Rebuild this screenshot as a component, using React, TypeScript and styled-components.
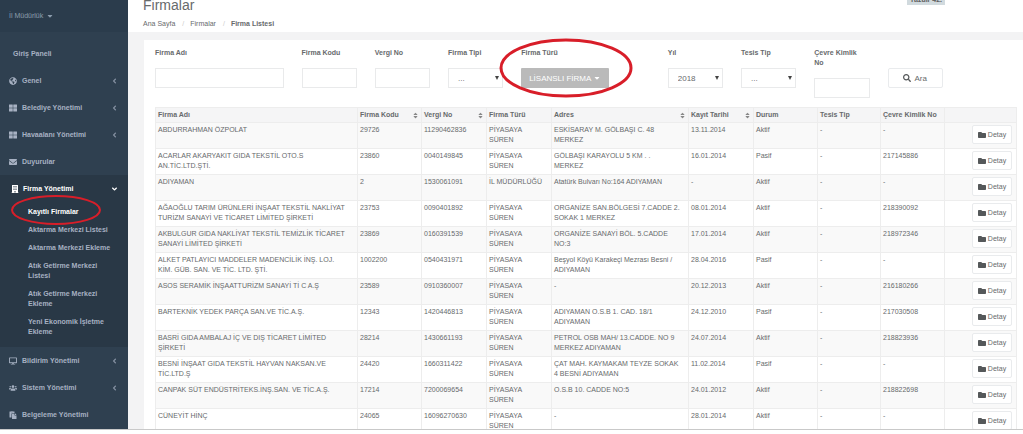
import React from "react";
import styled, { createGlobalStyle } from "styled-components";
import {
  FaGlobeAmericas,
  FaThLarge,
  FaEnvelope,
  FaBuilding,
  FaDesktop,
  FaUsers,
  FaPaste,
  FaFolder,
  FaSearch,
  FaAngleLeft,
  FaAngleDown,
  FaSort,
  FaCaretDown,
} from "react-icons/fa";

const GlobalStyle = createGlobalStyle`
  *, *::before, *::after { box-sizing: border-box; }
  body {
    margin: 0;
    background: #fff;
    color: #676a6c;
    font: 7px/10px "Liberation Sans", Arial, sans-serif;
  }
  a { color: inherit; text-decoration: none; }
  ul, ol { list-style: none; margin: 0; padding: 0; }
  button, input, select { font-family: inherit; color: inherit; margin: 0; }
`;

const Page = styled.div`
  height: 100vh;
  padding-bottom: 4px;
  overflow: hidden;
`;

const Shell = styled.div`
  display: flex;
  height: 100%;
  overflow: hidden;
  border-bottom: 1px solid #c9c9c9;
`;

const Sidebar = styled.nav`
  flex: 0 0 128px;
  background: #2f4050;
  color: #a7b1c2;
`;

const Profile = styled.button`
  display: flex;
  align-items: center;
  gap: 3px;
  width: 100%;
  height: 32px;
  padding: 0 9px;
  border: 0;
  background: #2b3c4c;
  color: #8b9cad;
  font-size: 7px;
  line-height: 10px;

  svg { width: 8px; height: 8px; }
`;

const Menu = styled.ul`
  padding-top: 8px;
  font-weight: bold;
`;

const MenuItem = styled.li<{ $active?: boolean }>`
  background: ${(p) => (p.$active ? "#293846" : "transparent")};
  color: ${(p) => (p.$active ? "#fff" : "inherit")};
  padding-bottom: ${(p) => (p.$active ? "6px" : "0")};
`;

const MenuLink = styled.a<{ $plain?: boolean; $indent?: boolean }>`
  display: flex;
  align-items: center;
  gap: ${(p) => (p.$indent ? "4px" : "5px")};
  height: 27px;
  padding: 0 10px 0 ${(p) => (p.$plain ? "13px" : p.$indent ? "11px" : "9px")};

  svg { width: 8px; height: 8px; }
  span { flex: 1; }
  span + svg { width: 7px; opacity: ${(p) => (p.$indent ? 1 : 0.7)}; }
`;

const SubMenu = styled.ul`
  padding-top: 1px;
  color: #a7b1c2;
`;

const SubLink = styled.a<{ $current?: boolean }>`
  display: block;
  position: relative;
  padding: 4px 12px 4px 28px;
  color: ${(p) => (p.$current ? "#fff" : "inherit")};
`;

const Ring = styled.svg<{ $left: number; $top: number }>`
  position: absolute;
  left: ${(p) => p.$left}px;
  top: ${(p) => p.$top}px;
  fill: none;
  stroke: #d81e29;
  pointer-events: none;
`;

const Main = styled.main`
  flex: 1;
  min-width: 0;
  background: #f3f3f4;
`;

const Heading = styled.header`
  display: flex;
  justify-content: space-between;
  align-items: flex-start;
  height: 32px;
  padding: 0 78px 0 15px;
  background: #fff;
`;

const Title = styled.h1`
  margin: 0 0 8px;
  font-size: 14px;
  line-height: 11px;
  font-weight: normal;
`;

const Crumbs = styled.ol`
  display: flex;
  gap: 7px;

  li + li::before {
    content: "/";
    padding-right: 6px;
    color: #ccc;
  }
`;

const Badge = styled.span`
  margin-top: -5px;
  padding: 0 3px;
  background: #d1dade;
  color: #5e5e5e;
  font-weight: bold;
`;

const Panel = styled.section`
  margin: 8px 0 0 16px;
  background: #fff;
`;

const Filters = styled.form`
  display: grid;
  grid-template-columns: repeat(12, 1fr);
  column-gap: 18px;
  padding: 8px 7px 9px 11px;
`;

const Field = styled.div<{ $span?: number }>`
  position: relative;
  grid-column: span ${(p) => p.$span ?? 1};
  display: flex;
  flex-direction: column;
  align-items: flex-start;
  gap: 10px;
  min-width: 0;
  font-weight: bold;

  label { white-space: pre-line; }
`;

const Input = styled.input`
  width: 100%;
  height: 20px;
  padding: 0 6px;
  border: 1px solid #e9eaeb;
  background: #fff;
  font-size: 8px;
`;

const SelectBox = styled.div`
  position: relative;
  width: 100%;

  svg {
    position: absolute;
    right: 3px;
    top: 7px;
    width: 6px;
    height: 6px;
    pointer-events: none;
  }
`;

const Select = styled.select`
  display: block;
  appearance: none;
  width: 100%;
  height: 20px;
  padding: 0 9px;
  border: 1px solid #e9eaeb;
  border-radius: 0;
  background: #fff;
  font-size: 8px;
`;

const TypeButton = styled.button`
  display: flex;
  align-items: center;
  justify-content: center;
  gap: 2px;
  width: 88px;
  height: 20px;
  padding: 0;
  border: 0;
  border-radius: 1px;
  background: #bababa;
  color: #fff;
  font-size: 8px;
`;

const PlainButton = styled.button<{ $large?: boolean }>`
  display: inline-flex;
  align-items: center;
  justify-content: center;
  vertical-align: top;
  gap: ${(p) => (p.$large ? "3px" : "2px")};
  width: ${(p) => (p.$large ? "100%" : "40px")};
  height: ${(p) => (p.$large ? "20px" : "19px")};
  margin-top: ${(p) => (p.$large ? "20px" : "0")};
  padding: 0;
  border: 1px solid #e9ebed;
  border-radius: 2px;
  background: #fff;
  font-size: ${(p) => (p.$large ? "8px" : "7px")};

  svg { width: 8px; height: 8px; color: #55585a; }
`;

const TableWrap = styled.div`
  padding: 0 7px 0 11px;
`;

const Table = styled.table`
  width: 100%;
  table-layout: fixed;
  border-collapse: collapse;

  th, td {
    border: 1px solid #ededed;
    padding: 2px;
    text-align: left;
    vertical-align: top;
  }
  th { height: 15px; background: #f5f5f6; }
  td { height: 26px; }
  tbody tr:nth-child(odd) { background: #f9f9f9; }
  td:last-child { text-align: right; padding-right: 4px; }
`;

const HeadCell = styled.div`
  display: flex;
  align-items: center;
  justify-content: space-between;
  white-space: nowrap;

  svg { width: 7px; height: 7px; color: #888; }
`;

const menuTop = [
  { label: "Genel", icon: FaGlobeAmericas, arrow: true },
  { label: "Belediye Yönetimi", icon: FaThLarge, arrow: true },
  { label: "Havaalanı Yönetimi", icon: FaThLarge, arrow: true },
  { label: "Duyurular", icon: FaEnvelope, arrow: false },
];

const menuBottom = [
  { label: "Bildirim Yönetimi", icon: FaDesktop, arrow: true },
  { label: "Sistem Yönetimi", icon: FaUsers, arrow: true },
  { label: "Belgeleme Yönetimi", icon: FaPaste, arrow: false },
];

const subMenu = [
  "Aktarma Merkezi Listesi",
  "Aktarma Merkezi Ekleme",
  "Atık Getirme Merkezi Listesi",
  "Atık Getirme Merkezi Ekleme",
  "Yeni Ekonomik İşletme Ekleme",
];

const columns = [
  { label: "Firma Adı", width: 202 },
  { label: "Firma Kodu", width: 64, sort: true },
  { label: "Vergi No", width: 65, sort: true },
  { label: "Firma Türü", width: 65 },
  { label: "Adres", width: 137, sort: true },
  { label: "Kayıt Tarihi", width: 65, sort: true },
  { label: "Durum", width: 64 },
  { label: "Tesis Tip", width: 63 },
  { label: "Çevre Kimlik No", width: 64 },
  { label: "", width: 72 },
];

const PS = "PİYASAYA\nSÜREN";

const rows = [
  ["ABDURRAHMAN ÖZPOLAT", "29726", "11290462836", PS, "ESKİSARAY M. GÖLBAŞI C. 48\nMERKEZ", "13.11.2014", "Aktif", "-", "-"],
  ["ACARLAR AKARYAKIT GIDA TEKSTİL OTO.S\nAN.TİC.LTD.ŞTİ.", "23860", "0040149845", PS, "GÖLBAŞI KARAYOLU 5 KM . .\nMERKEZ", "16.01.2014", "Pasif", "-", "217145886"],
  ["ADIYAMAN", "2", "1530061091", "İL MÜDÜRLÜĞÜ", "Atatürk Bulvarı No:164 ADIYAMAN", "-", "Aktif", "-", "-"],
  ["AĞAOĞLU TARIM ÜRÜNLERİ İNŞAAT TEKSTİL NAKLİYAT\nTURİZM SANAYİ VE TİCARET LİMİTED ŞİRKETİ", "23753", "0090401892", PS, "ORGANİZE SAN.BÖLGESİ 7.CADDE 2.\nSOKAK 1 MERKEZ", "08.01.2014", "Aktif", "-", "218390092"],
  ["AKBULGUR GIDA NAKLİYAT TEKSTİL TEMİZLİK TİCARET\nSANAYİ LİMİTED ŞİRKETİ", "23869", "0160391539", PS, "ORGANİZE SANAYİ BÖL. 5.CADDE\nNO:3", "17.01.2014", "Aktif", "-", "218972346"],
  ["ALKET PATLAYICI MADDELER MADENCİLİK İNŞ. LOJ.\nKİM. GÜB. SAN. VE TİC. LTD. ŞTİ.", "1002200", "0540431971", PS, "Beşyol Köyü Karakeçi Mezrası Besni /\nADIYAMAN", "28.04.2016", "Pasif", "-", "-"],
  ["ASOS SERAMİK İNŞAATTURİZM SANAYİ Tİ C A.Ş", "23589", "0910360007", PS, "-", "20.12.2013", "Aktif", "-", "216180266"],
  ["BARTEKNİK YEDEK PARÇA SAN.VE TİC.A.Ş.", "12343", "1420446813", PS, "ADIYAMAN O.S.B 1. CAD. 18/1\nADIYAMAN", "24.12.2010", "Pasif", "-", "217030508"],
  ["BASRİ GIDA AMBALAJ İÇ VE DIŞ TİCARET LİMİTED\nŞİRKETİ", "28214", "1430661193", PS, "PETROL OSB MAH/ 13.CADDE. NO 9\nMERKEZ ADIYAMAN", "24.07.2014", "Aktif", "-", "218823936"],
  ["BESNİ İNŞAAT GIDA TEKSTİL HAYVAN NAKSAN.VE\nTİC.LTD.Ş", "24420", "1660311422", PS, "ÇAT MAH. KAYMAKAM TEYZE SOKAK\n4 BESNİ ADIYAMAN", "11.02.2014", "Pasif", "-", "-"],
  ["CANPAK SÜT ENDÜSTRİTEKS.İNŞ.SAN. VE TİC.A.Ş.", "17214", "7200069654", PS, "O.S.B 10. CADDE NO:5", "24.01.2012", "Aktif", "-", "218822698"],
  ["CÜNEYİT HİNÇ", "24065", "16096270630", PS, "-", "28.01.2014", "Aktif", "-", "-"],
];

const CellText = styled.span`
  white-space: pre-line;
`;

type Entry = { label: string; icon: React.ComponentType; arrow: boolean };

function Entries({ items }: { items: Entry[] }) {
  return (
    <>
      {items.map(({ label, icon: Icon, arrow }) => (
        <MenuItem key={label}>
          <MenuLink href="#">
            <Icon />
            <span>{label}</span>
            {arrow && <FaAngleLeft />}
          </MenuLink>
        </MenuItem>
      ))}
    </>
  );
}

function TextField({ id, label, span }: { id: string; label: string; span?: number }) {
  return (
    <Field $span={span}>
      <label htmlFor={id}>{label}</label>
      <Input id={id} type="text" />
    </Field>
  );
}

function SelectField({ id, label, value }: { id: string; label: string; value: string }) {
  return (
    <Field>
      <label htmlFor={id}>{label}</label>
      <SelectBox>
        <Select id={id} defaultValue={value}>
          <option value={value}>{value}</option>
        </Select>
        <svg viewBox="0 0 6 6" fill="#444" aria-hidden="true">
          <path d="M1 1h4L3 5z" />
        </svg>
      </SelectBox>
    </Field>
  );
}

export default function App() {
  return (
    <Page>
      <GlobalStyle />
      <Shell>
        <Sidebar>
          <Profile type="button">
            İl Müdürlük <FaCaretDown />
          </Profile>
          <Menu>
            <MenuItem>
              <MenuLink href="#" $plain>
                <span>Giriş Paneli</span>
              </MenuLink>
            </MenuItem>
            <Entries items={menuTop} />
            <MenuItem $active>
              <MenuLink href="#" $indent>
                <FaBuilding />
                <span>Firma Yönetimi</span>
                <FaAngleDown />
              </MenuLink>
              <SubMenu>
                <li>
                  <SubLink href="#" $current>
                    Kayıtlı Firmalar
                    <Ring $left={10} $top={-9} width="92" height="32" viewBox="0 0 92 32" strokeWidth="2">
                      <ellipse cx="46" cy="16" rx="44" ry="14" />
                    </Ring>
                  </SubLink>
                </li>
                {subMenu.map((label) => (
                  <li key={label}>
                    <SubLink href="#">{label}</SubLink>
                  </li>
                ))}
              </SubMenu>
            </MenuItem>
            <Entries items={menuBottom} />
          </Menu>
        </Sidebar>

        <Main>
          <Heading>
            <div>
              <Title>Firmalar</Title>
              <Crumbs>
                <li><a href="#">Ana Sayfa</a></li>
                <li><a href="#">Firmalar</a></li>
                <li><strong>Firma Listesi</strong></li>
              </Crumbs>
            </div>
            <Badge>Yazdır 42.</Badge>
          </Heading>

          <Panel>
            <Filters>
              <TextField id="name" label="Firma Adı" span={2} />
              <TextField id="code" label="Firma Kodu" />
              <TextField id="tax" label="Vergi No" />
              <SelectField id="kind" label="Firma Tipi" value="..." />
              <Field $span={2}>
                <label htmlFor="type">Firma Türü</label>
                <TypeButton id="type" type="button">
                  LİSANSLI FİRMA <FaCaretDown />
                </TypeButton>
                <Ring $left={-23} $top={-11} width="136" height="61" viewBox="0 0 136 61" strokeWidth="3">
                  <ellipse cx="68" cy="31" rx="65" ry="28" />
                </Ring>
              </Field>
              <SelectField id="year" label="Yıl" value="2018" />
              <SelectField id="facility" label="Tesis Tip" value="..." />
              <TextField id="identity" label={"Çevre Kimlik\nNo"} />
              <Field>
                <PlainButton type="submit" $large>
                  <FaSearch /> Ara
                </PlainButton>
              </Field>
            </Filters>

            <TableWrap>
              <Table>
                <colgroup>
                  {columns.map((c, i) => (
                    <col key={i} width={c.width} />
                  ))}
                </colgroup>
                <thead>
                  <tr>
                    {columns.map((c, i) => (
                      <th key={i} scope="col">
                        <HeadCell>
                          {c.label}
                          {c.sort && <FaSort />}
                        </HeadCell>
                      </th>
                    ))}
                  </tr>
                </thead>
                <tbody>
                  {rows.map((cells) => (
                    <tr key={cells[0]}>
                      {cells.map((cell, i) => (
                        <td key={i}>
                          <CellText>{cell}</CellText>
                        </td>
                      ))}
                      <td>
                        <PlainButton type="button">
                          <FaFolder /> Detay
                        </PlainButton>
                      </td>
                    </tr>
                  ))}
                </tbody>
              </Table>
            </TableWrap>
          </Panel>
        </Main>
      </Shell>
    </Page>
  );
}
